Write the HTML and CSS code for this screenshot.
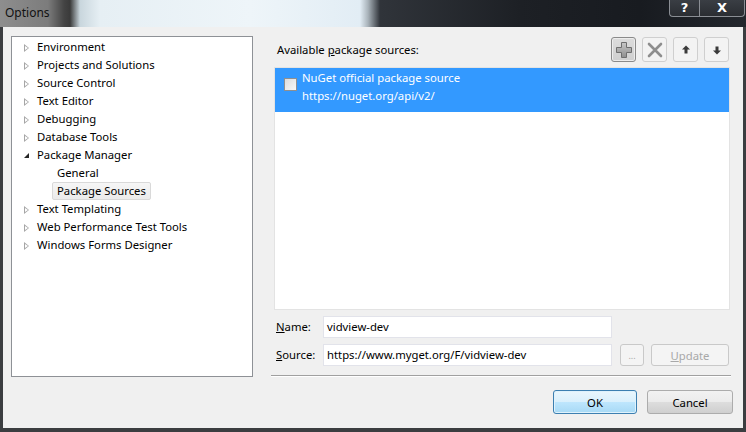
FILE: index.html
```html
<!DOCTYPE html>
<html>
<head>
<meta charset="utf-8">
<link rel="stylesheet" href="styles.css">
</head>
<body>
<div class="window">
  <div class="titlebar">
    <span class="title">Options</span>
    <div class="caption-btns">
      <span class="cap help">?</span>
      <span class="cap close">X</span>
    </div>
  </div>
  <div class="client">
    <div class="main">
      <div class="tree">
        <div class="node"><span class="arrow"></span><span class="lbl">Environment</span></div>
        <div class="node"><span class="arrow"></span><span class="lbl">Projects and Solutions</span></div>
        <div class="node"><span class="arrow"></span><span class="lbl">Source Control</span></div>
        <div class="node"><span class="arrow"></span><span class="lbl">Text Editor</span></div>
        <div class="node"><span class="arrow"></span><span class="lbl">Debugging</span></div>
        <div class="node"><span class="arrow"></span><span class="lbl">Database Tools</span></div>
        <div class="node"><span class="arrow open"></span><span class="lbl">Package Manager</span></div>
        <div class="node child"><span class="lbl">General</span></div>
        <div class="node child"><span class="lbl selected">Package Sources</span></div>
        <div class="node"><span class="arrow"></span><span class="lbl">Text Templating</span></div>
        <div class="node"><span class="arrow"></span><span class="lbl">Web Performance Test Tools</span></div>
        <div class="node"><span class="arrow"></span><span class="lbl">Windows Forms Designer</span></div>
      </div>
      <div class="pane">
        <div class="pane-head">
          <span class="pane-label">Available <u>p</u>ackage sources:</span>
          <div class="tools">
            <span class="tbtn active">
              <svg width="20" height="20" viewBox="0 0 20 20"><defs><linearGradient id="pg" x1="0" y1="0" x2="0" y2="1"><stop offset="0" stop-color="#c8c8c8"/><stop offset="1" stop-color="#8e8e8e"/></linearGradient></defs><path d="M7.5 2.5h5v5h5v5h-5v5h-5v-5h-5v-5h5z" fill="url(#pg)" stroke="#6e6e6e" stroke-width="1"/></svg>
            </span>
            <span class="tbtn">
              <svg width="20" height="20" viewBox="0 0 20 20"><path d="M4 4L16 16M16 4L4 16" stroke="#8e8e8e" stroke-width="2.6" stroke-linecap="round"/></svg>
            </span>
            <span class="tbtn">
              <svg width="20" height="20" viewBox="0 0 20 20"><path d="M10 5.5L14 9.5H11.5V13.5H8.5V9.5H6Z" fill="#3a3a3a"/></svg>
            </span>
            <span class="tbtn">
              <svg width="20" height="20" viewBox="0 0 20 20"><path d="M10 14.5L14 10.5H11.5V6.5H8.5V10.5H6Z" fill="#3a3a3a"/></svg>
            </span>
          </div>
        </div>
        <div class="list">
          <div class="item">
            <span class="check"></span>
            <div class="item-text">
              <div>NuGet official package source</div>
              <div>https://nuget.org/api/v2/</div>
            </div>
          </div>
        </div>
        <div class="field">
          <span class="flabel"><u>N</u>ame:</span>
          <span class="input">vidview-dev</span>
        </div>
        <div class="field">
          <span class="flabel"><u>S</u>ource:</span>
          <span class="input">https://www.myget.org/F/vidview-dev</span>
          <span class="btn small disabled">...</span>
          <span class="btn update disabled"><u>U</u>pdate</span>
        </div>
        <div class="sep"></div>
      </div>
    </div>
    <div class="footer">
      <span class="btn dlg ok default">OK</span>
      <span class="btn dlg cancel">Cancel</span>
    </div>
  </div>
</div>
</body>
</html>
```

FILE: styles.css
```css
html, body {
  margin: 0;
  padding: 0;
}
body {
  width: 746px;
  height: 432px;
  overflow: hidden;
  font-family: "Noto Sans", "Open Sans", sans-serif;
  font-size: 11.3px;
  color: #000;
}
.window {
  width: 746px;
  height: 432px;
  display: flex;
  flex-direction: column;
  background: #3b3d40;
  box-sizing: border-box;
  padding: 0 3px 4px 3px;
}
.titlebar {
  height: 27px;
  flex: none;
  margin: 0 -3px;
  display: flex;
  align-items: flex-start;
  justify-content: space-between;
  background: linear-gradient(90deg, #8e8e8e 0, #7c7c7c 48px, #444 64px, #3a3a3a 70px, #c9d6dd 80px, #e6eff4 100px, #eef5f9 250px, #e2edf5 360px, #a9b3ba 368px, #30343a 380px, #1d2025 520px, #181b20 640px, #23272d 746px);
}
.title {
  padding: 5px 0 0 5px;
  line-height: 16px;
  font-size: 12px;
  color: #111;
}
.caption-btns {
  display: flex;
  margin-right: 1px;
}
.cap {
  height: 17px;
  box-sizing: border-box;
  border: 1px solid #8a8e94;
  border-top: none;
  color: #fff;
  font-weight: bold;
  font-size: 13px;
  line-height: 15px;
  text-align: center;
  background: linear-gradient(#3a3e44, #2a2d32);
  font-family: "DejaVu Sans", sans-serif;
}
.help {
  width: 30px;
  border-radius: 0 0 0 4px;
  border-right: none;
}
.close {
  width: 46px;
  border-radius: 0 0 4px 0;
}
.client {
  flex: 1;
  background: #f0f0f0;
  display: flex;
  flex-direction: column;
  padding: 9px 10px 0 8px;
  box-sizing: border-box;
}
.main {
  display: flex;
  gap: 18px;
  height: 341px;
  flex: none;
}
.tree {
  width: 242px;
  flex: none;
  box-sizing: border-box;
  border: 1px solid #8e9196;
  background: #fff;
  padding-top: 1px;
}
.node {
  height: 18px;
  display: flex;
  align-items: center;
  padding-left: 12px;
}
.node.child {
  padding-left: 42px;
}
.arrow {
  width: 10px;
  height: 18px;
  position: relative;
  flex: none;
}
.arrow::before {
  content: "";
  position: absolute;
  left: 0;
  top: 6px;
  width: 0;
  height: 0;
  border-left: 5px solid #a6a6a6;
  border-top: 4px solid transparent;
  border-bottom: 4px solid transparent;
}
.arrow::after {
  content: "";
  position: absolute;
  left: 1px;
  top: 8px;
  width: 0;
  height: 0;
  border-left: 3px solid #fff;
  border-top: 2px solid transparent;
  border-bottom: 2px solid transparent;
}
.arrow.open::before {
  left: 0;
  top: 7px;
  border: none;
  border-right: 5px solid #262626;
  border-top: 5px solid transparent;
}
.arrow.open::after {
  display: none;
}
.lbl {
  line-height: 16px;
  padding: 0 2px;
  border: 1px solid transparent;
  white-space: nowrap;
}
.lbl.selected {
  background: linear-gradient(#f6f6f6, #ebebeb);
  border-color: #d9d9d9;
  border-radius: 2px;
  padding: 0 4px;
  margin-left: -2px;
}
.pane {
  flex: 1;
  min-width: 0;
  display: flex;
  flex-direction: column;
}
.pane-head {
  height: 31px;
  flex: none;
  display: flex;
  justify-content: space-between;
  align-items: flex-start;
  padding: 1px 4px 0 6px;
  box-sizing: border-box;
}
.pane-label {
  line-height: 16px;
  margin-top: 5px;
}
.tools {
  display: flex;
  gap: 6px;
}
.tbtn {
  width: 25px;
  height: 25px;
  box-sizing: border-box;
  border: 1px solid #cfcfcf;
  border-radius: 3px;
  background: #f3f3f3;
  display: flex;
  align-items: center;
  justify-content: center;
}
.tbtn.active {
  border-color: #8a8a8a;
  background: linear-gradient(#dcdcdc, #cfcfcf);
  box-shadow: inset 0 0 0 1px #ececec;
}
.list {
  height: 243px;
  flex: none;
  margin: 0 3px;
  background: #fff;
  border: 1px solid #e3e3e3;
  box-sizing: border-box;
}
.item {
  height: 44px;
  background: #3399ff;
  color: #fff;
  display: flex;
  align-items: flex-start;
  padding: 1px 0 0 9px;
  box-sizing: border-box;
}
.check {
  width: 13px;
  height: 13px;
  box-sizing: border-box;
  border: 1px solid #8f8f8f;
  background: linear-gradient(135deg, #dcdcdc, #f8f8f8);
  margin: 9px 5px 0 0;
  flex: none;
}
.item-text {
  line-height: 18px;
}
.field {
  display: flex;
  align-items: center;
  margin-top: 6px;
  gap: 8px;
}
.flabel {
  width: 39px;
  padding-left: 5px;
  line-height: 16px;
}
.input {
  width: 289px;
  height: 22px;
  box-sizing: border-box;
  border: 1px solid #e2e3ea;
  background: #fff;
  padding: 0 3px;
  line-height: 20px;
}
.btn {
  box-sizing: border-box;
  border: 1px solid #acacac;
  border-radius: 3px;
  display: flex;
  align-items: center;
  justify-content: center;
  background: linear-gradient(#f2f2f2 0, #ebebeb 50%, #dddddd 51%, #cfcfcf 100%);
}
.btn.disabled {
  color: #a8a8a8;
  border-color: #c9c9c9;
  background: #f4f4f4;
}
.btn.small {
  width: 24px;
  height: 22px;
  font-size: 9px;
}
.btn.update {
  width: 78px;
  height: 22px;
  margin-left: -1px;
}
.sep {
  margin-top: auto;
  height: 1px;
  background: #a0a0a0;
  border-bottom: 1px solid #fff;
  margin-right: 2px;
}
.footer {
  display: flex;
  justify-content: flex-end;
  gap: 10px;
  padding-top: 13px;
}
.btn.dlg {
  height: 24px;
}
.btn.ok {
  width: 84px;
}
.btn.cancel {
  width: 86px;
}
.btn.default {
  border-color: #3c7fb1;
  background: linear-gradient(#eaf6fd 0, #d9f0fc 50%, #bee6fd 51%, #a7d9f5 100%);
  box-shadow: inset 0 0 0 1px #dff2fc;
}
```
